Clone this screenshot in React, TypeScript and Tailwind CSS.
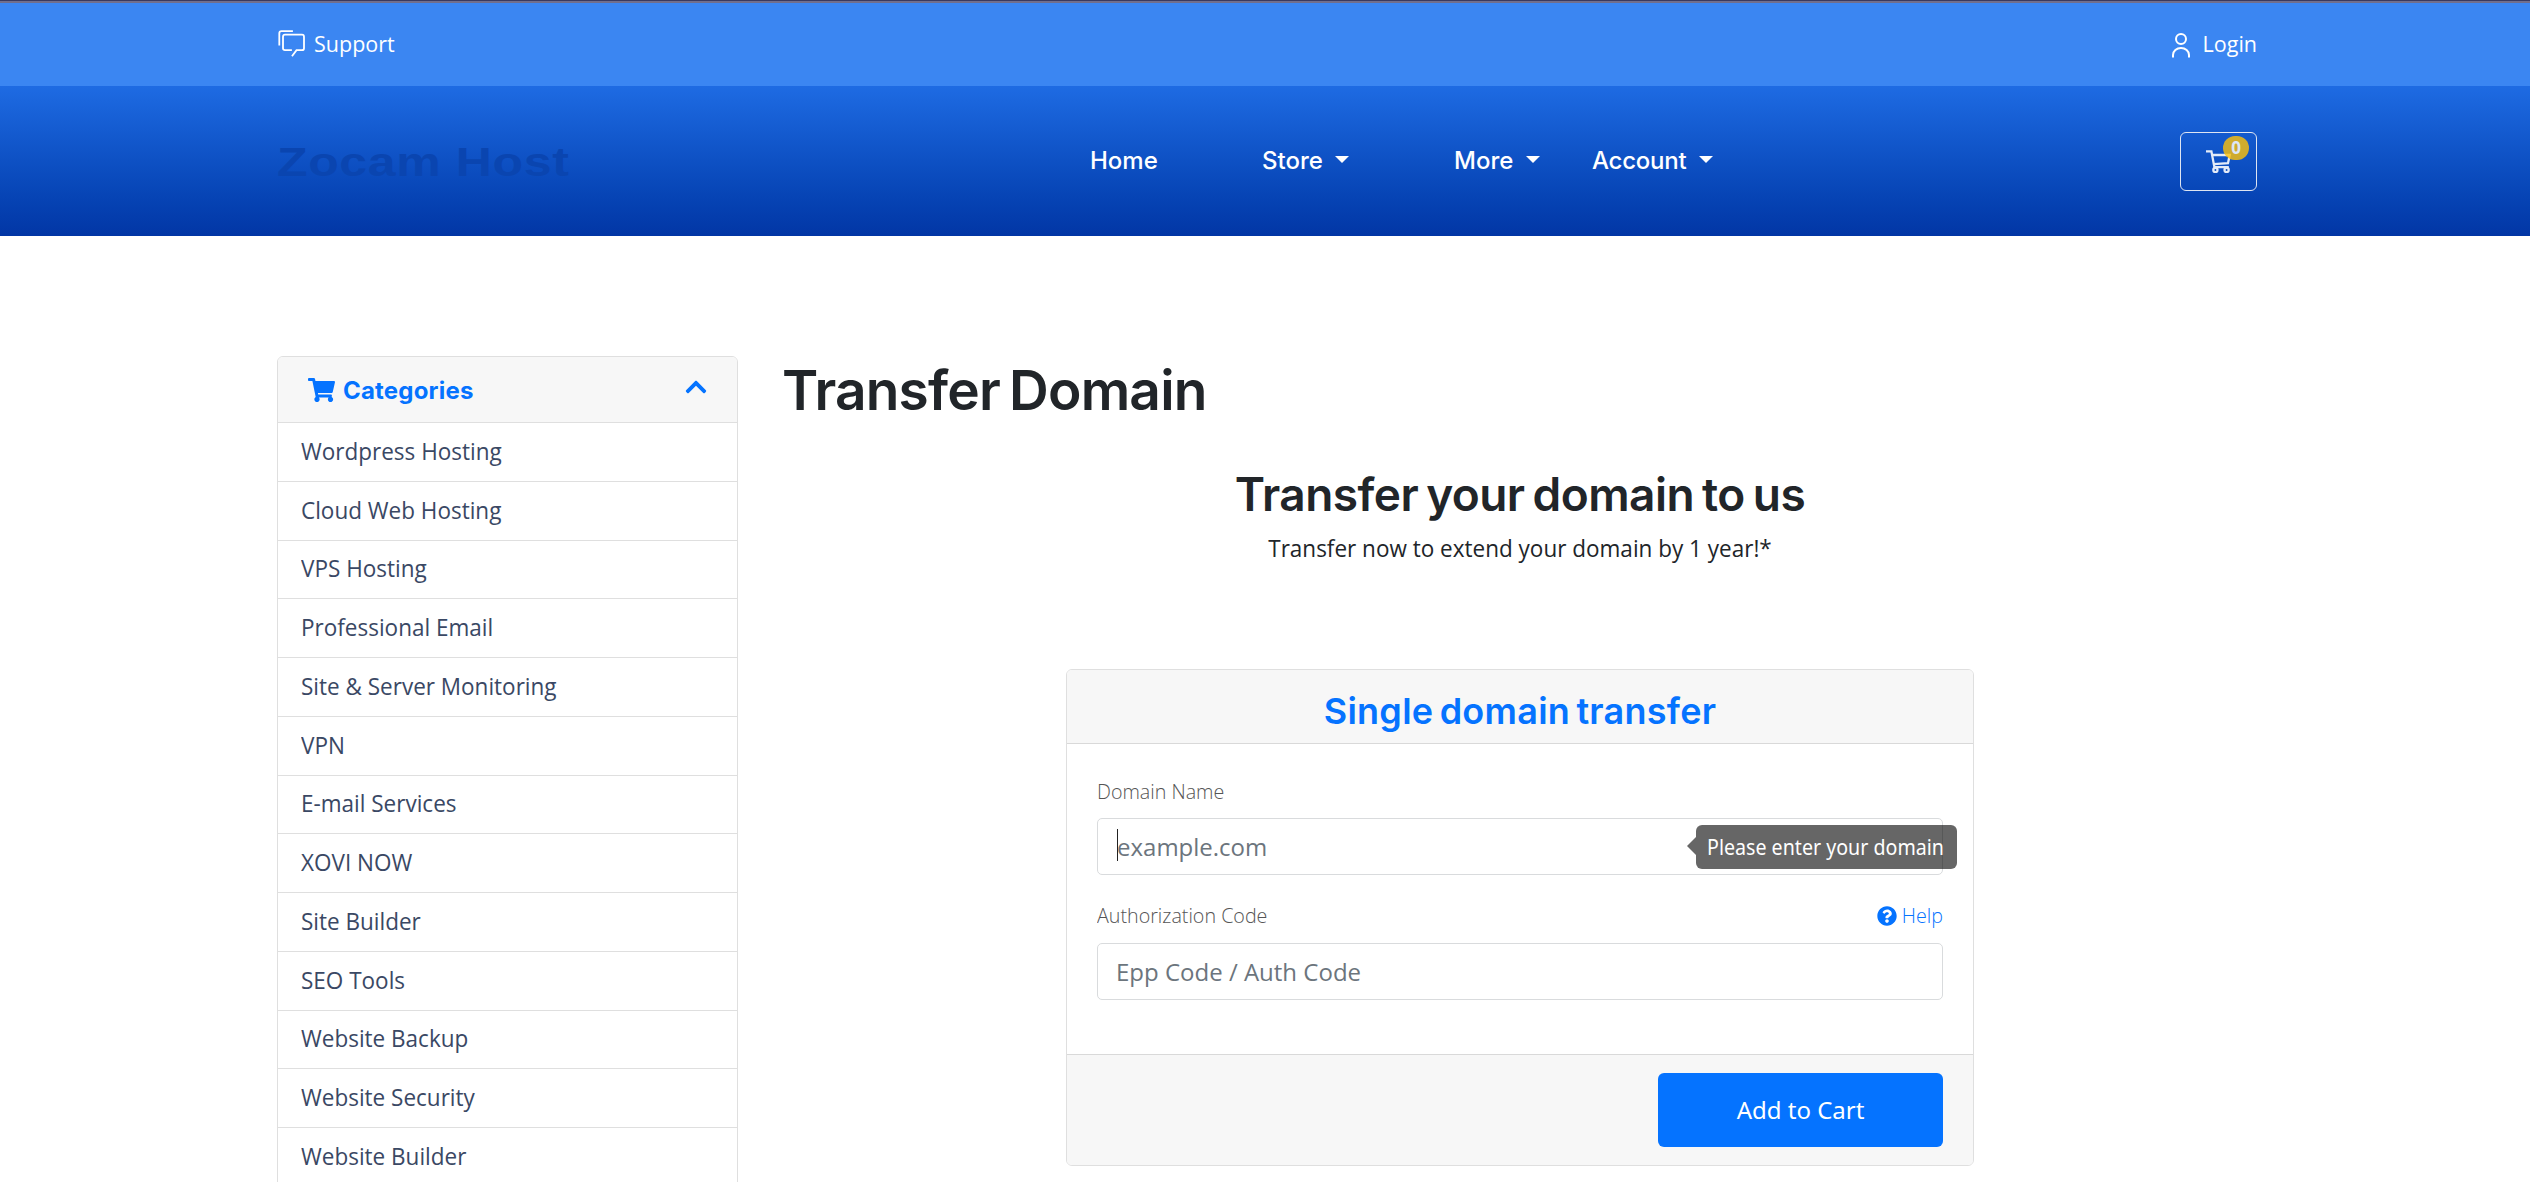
import React from "react";
import { FaChevronUp, FaQuestionCircle, FaShoppingCart } from "react-icons/fa";

const categories = [
  "Wordpress Hosting",
  "Cloud Web Hosting",
  "VPS Hosting",
  "Professional Email",
  "Site & Server Monitoring",
  "VPN",
  "E-mail Services",
  "XOVI NOW",
  "Site Builder",
  "SEO Tools",
  "Website Backup",
  "Website Security",
  "Website Builder",
];

function ChatIcon() {
  return (
    <svg viewBox="0 0 28 28" className="h-7 w-7" fill="none" stroke="white" strokeWidth="1.8" strokeLinecap="square">
      <path d="M2.3 14.5V3.5Q2.3 1.2 4.5 1.2H15" />
      <path d="M14 20.2H8Q6 20.2 6 18.2V6.7Q6 4.7 8 4.7H25Q27 4.7 27 6.7V18.2Q27 20.2 25 20.2H19.5L15.5 25.6" />
    </svg>
  );
}

function UserIcon() {
  return (
    <svg viewBox="0 0 18 25" className="h-[25px] w-[18px]" fill="none" stroke="white" strokeWidth="2">
      <circle cx="9" cy="6" r="5" />
      <path d="M1 24.5V22A8 7 0 0 1 17 22V24.5" />
    </svg>
  );
}

function CartIcon() {
  return (
    <svg viewBox="0 0 25 23" className="h-[23px] w-[25px]" fill="none" stroke="#e4ebf8" strokeWidth="2.3">
      <path d="M0 1.4H5.4L8.4 17.2H22.8" />
      <path d="M6.2 5H23.7L22 13.2L7.7 14.2" />
      <circle cx="9.4" cy="20" r="2.1" />
      <circle cx="20.6" cy="20" r="2.1" />
    </svg>
  );
}

function Caret() {
  return <span className="-mt-[3px] h-0 w-0 border-x-[7px] border-t-[7px] border-x-transparent border-t-white" />;
}

function TopBar() {
  return (
    <div className="h-[86px] border-t border-[#39395f] bg-[#3b86f2]">
      <div className="h-[2px] bg-[#716e8c]" />
      <div className="ml-[277px] flex h-[83px] w-[1980px] items-center justify-between text-[21.5px] font-medium text-white">
        <a className="flex items-center gap-[9px]">
          <span className="-mt-px"><ChatIcon /></span>
          <span>Support</span>
        </a>
        <a className="flex items-center">
          <span className="mr-[13px] mt-[2px]"><UserIcon /></span>
          <span>Login</span>
        </a>
      </div>
    </div>
  );
}

function Header() {
  return (
    <header className="h-[150px] bg-linear-to-b from-[#1e6be3] to-[#0236a5]">
      <div className="ml-[277px] flex h-full w-[1980px] items-center">
        <a className="w-[813px] pt-[2px]">
          <span className="inline-block origin-left scale-x-[1.25] font-['Liberation_Sans',sans-serif] text-[40px] font-bold leading-[44px] tracking-[0.5px] text-[#0a45b0]">
            Zocam Host
          </span>
        </a>
        <nav className="flex flex-1 items-center font-['Inter',sans-serif] text-2xl font-medium text-white">
          <a className="w-[172px]">Home</a>
          <a className="flex w-[192px] items-center gap-[12px]">Store <Caret /></a>
          <a className="flex w-[138px] items-center gap-[13px]">More <Caret /></a>
          <a className="flex items-center gap-[13px]"><span className="tracking-[-0.25px]">Account</span> <Caret /></a>
        </nav>
        <button className="relative flex h-[59px] w-[77px] items-center justify-center rounded-[6px] border border-[#dfe5f2]">
          <CartIcon />
          <span className="absolute right-[7px] top-[3px] flex h-6 w-[26px] items-center justify-center rounded-full bg-[#ffc107]/80 text-[17px] font-bold text-[#dde6f5]">
            0
          </span>
        </button>
      </div>
    </header>
  );
}

function Sidebar() {
  return (
    <aside className="w-[461px] shrink-0 rounded-t-[6px] border border-[#dfdfdf]">
      <div className="flex h-[66px] items-center justify-between rounded-t-[5px] border-b border-[#dfdfdf] bg-[#f7f7f7] pl-[30px] pr-[29px] text-[#0573ff]">
        <div className="flex items-center gap-2 pt-[2px]">
          <FaShoppingCart className="-mt-0.5 h-6 w-[27px]" />
          <span className="font-['Inter',sans-serif] text-2xl font-bold tracking-[0.2px]">Categories</span>
        </div>
        <FaChevronUp className="mb-[5px] h-6 w-6" />
      </div>
      <ul>
        {categories.map((name) => (
          <li
            key={name}
            className="flex h-[58.75px] items-center border-b border-[#dfdfdf] pb-[2px] pl-[22.5px] text-2xl text-[#3a4864]"
          >
            <span className="origin-left scale-x-[0.9375]">{name}</span>
          </li>
        ))}
      </ul>
    </aside>
  );
}

function TransferCard() {
  return (
    <section className="mx-auto mt-[103px] w-[908px] rounded-[6px] border border-[#dfdfdf]">
      <h3 className="flex h-[74px] items-center justify-center rounded-t-[5px] border-b border-[#d9d9d9] bg-[#f7f7f7] pt-2 font-['Inter',sans-serif] text-4xl font-semibold tracking-[0.25px] [word-spacing:-3px] text-[#0573ff]">
        Single domain transfer
      </h3>
      <div className="h-[310px] px-[30px] pt-[33px]">
        <div className="h-[41px] text-[21px] font-light leading-[29px] text-[#555]">
          <span className="inline-block origin-left scale-x-[0.9375]">Domain Name</span>
        </div>
        <div className="relative flex h-[57px] items-center rounded-[5px] border border-[#d9dbdd] pl-[19px] text-2xl text-[#6c757d]">
          <span className="mt-[-3px] h-8 w-px bg-[#222]" />
          <span className="-ml-px">example.com</span>
          <div className="absolute left-[589px] top-[6px] flex items-center">
            <span className="mt-[-2px] h-0 w-0 border-y-[9px] border-r-[9px] border-y-transparent border-r-[#666]" />
            <div className="flex h-11 w-[261px] items-center whitespace-nowrap rounded-[6px] bg-black/60 pl-[11px] font-['Noto_Sans',sans-serif] text-[21px] text-white">
              <span className="origin-left scale-x-[0.935]">Please enter your domain</span>
            </div>
          </div>
        </div>
        <div className="mt-[26px] flex h-[42px] items-start justify-between text-[21px] font-light leading-[29px] text-[#555]">
          <span className="inline-block origin-left scale-x-[0.9375]">Authorization Code</span>
          <a className="flex items-center gap-[2px] text-[#0573ff]">
            <FaQuestionCircle className="h-5 w-5" />
            <span className="origin-right scale-x-[0.9375]">Help</span>
          </a>
        </div>
        <div className="flex h-[57px] items-center rounded-[5px] border border-[#d9dbdd] pl-[18px] text-2xl text-[#6c757d]">
          Epp Code / Auth Code
        </div>
      </div>
      <div className="flex h-[111px] items-center justify-end rounded-b-[5px] border-t border-[#d9d9d9] bg-[#f7f7f7] pr-[30px]">
        <button className="h-[74px] w-[285px] rounded-[6px] bg-[#0573ff] font-['Noto_Sans',sans-serif] text-2xl text-white">Add to Cart</button>
      </div>
    </section>
  );
}

export default function App() {
  return (
    <div className="h-[1182px] overflow-hidden bg-white font-['Open_Sans',sans-serif]">
      <TopBar />
      <Header />
      <div className="ml-[277px] flex w-[1980px] gap-[45px] pt-[120px]">
        <Sidebar />
        <main className="flex-1 text-[#212529]">
          <h1 className="-mb-px -ml-px h-[111px] font-['Inter',sans-serif] text-[55px] font-semibold leading-[68px] tracking-[-0.8px] [word-spacing:-4px]">
            Transfer Domain
          </h1>
          <h2 className="text-center font-['Inter',sans-serif] text-[46px] font-semibold leading-[56px] tracking-[-0.55px] [word-spacing:-3px]">
            Transfer your domain to us
          </h2>
          <p className="mt-2 scale-x-[0.9375] text-center text-2xl leading-9">Transfer now to extend your domain by 1 year!*</p>
          <TransferCard />
        </main>
      </div>
    </div>
  );
}
